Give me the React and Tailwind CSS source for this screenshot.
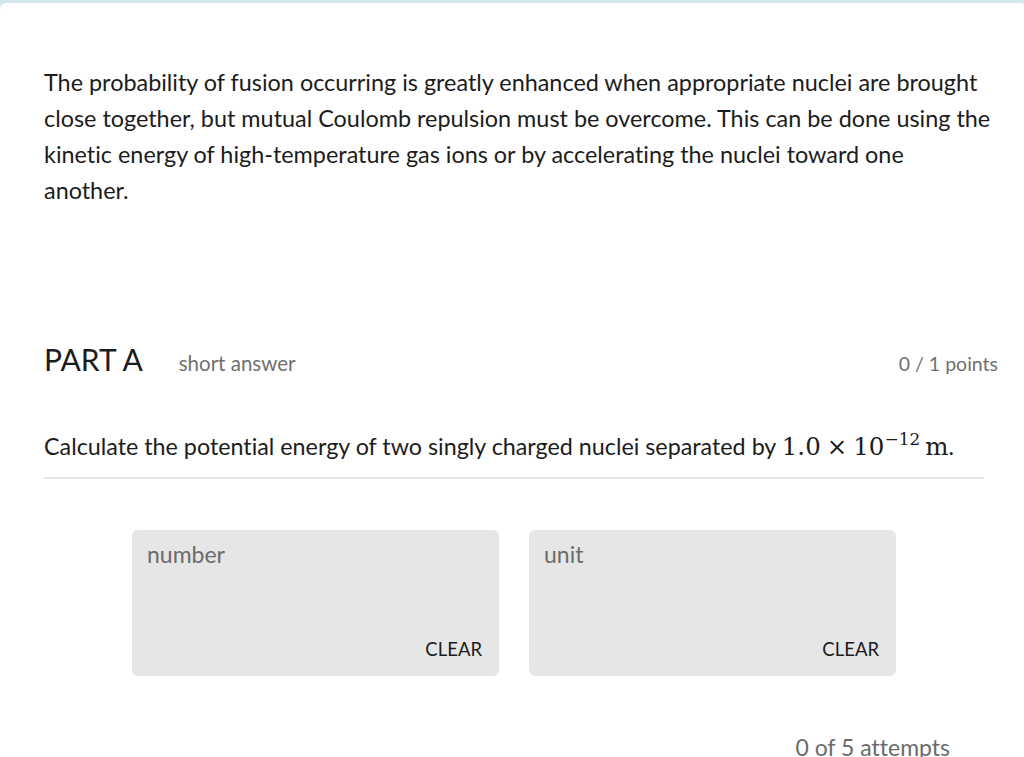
export default function App() {
  const lato = { fontFamily: 'Lato, "Open Sans", sans-serif' };
  return (
    <div className="w-[1024px] h-[757px] overflow-hidden bg-[#d5e7ee] pt-[3px] [font-variant-ligatures:none]" style={lato}>
      <div className="h-full bg-white rounded-tl-[6px] rounded-tr-[3px] pl-[44px] pr-[40px]">
        <p className="pt-[61px] text-[23.4px] leading-[36px] text-[#1c1c1c] w-[970px]">
          The probability of fusion occurring is greatly enhanced when appropriate nuclei are brought<br />
          close together, but mutual Coulomb repulsion must be overcome. This can be done using the<br />
          kinetic energy of high-temperature gas ions or by accelerating the nuclei toward one<br />
          another.
        </p>
        <div className="mt-[135px] flex items-baseline">
          <span className="text-[30px] leading-[32px] text-[#1c1c1c]">PART A</span>
          <span className="ml-[36px] text-[20.5px] text-[#707070]">short answer</span>
          <span className="ml-auto -mr-[14px] text-[19.5px] text-[#707070]">0 / 1 points</span>
        </div>
        <div className="mt-[49px] w-[940px] border-b-2 border-[#e4e4e4] pb-[10px]">
          <p className="text-[23.3px] leading-[36px] text-[#1c1c1c] whitespace-nowrap">
            Calculate the potential energy of two singly charged nuclei separated by{' '}
            <span className="text-[24.5px]" style={{ fontFamily: '"DejaVu Serif", "Liberation Serif", serif' }}>
              1.0<span className="mx-[6px]">×</span>10<span className="inline-block relative -top-[10px] text-[17px]">−12</span>
              <span className="ml-[5px]">m</span>
            </span>.
          </p>
        </div>
        <div className="mt-[51px] w-[940px] flex justify-center gap-[30px]">
          <div className="w-[367px] h-[146px] bg-[#e6e6e6] rounded-[6px] flex flex-col px-[15px] pt-[7px] pb-[12px]">
            <span className="text-[23px] text-[#6b6b6b]">number</span>
            <span className="mt-auto self-end text-[18.5px] text-[#1c1c1c] pr-[2px]">CLEAR</span>
          </div>
          <div className="w-[367px] h-[146px] bg-[#e6e6e6] rounded-[6px] flex flex-col px-[15px] pt-[7px] pb-[12px]">
            <span className="text-[23px] text-[#6b6b6b]">unit</span>
            <span className="mt-auto self-end text-[18.5px] text-[#1c1c1c] pr-[2px]">CLEAR</span>
          </div>
        </div>
        <div className="mt-[54px] w-[940px] flex justify-end pr-[34px]">
          <span className="text-[23px] text-[#6b6b6b]">0 of 5 attempts</span>
        </div>
      </div>
    </div>
  );
}
